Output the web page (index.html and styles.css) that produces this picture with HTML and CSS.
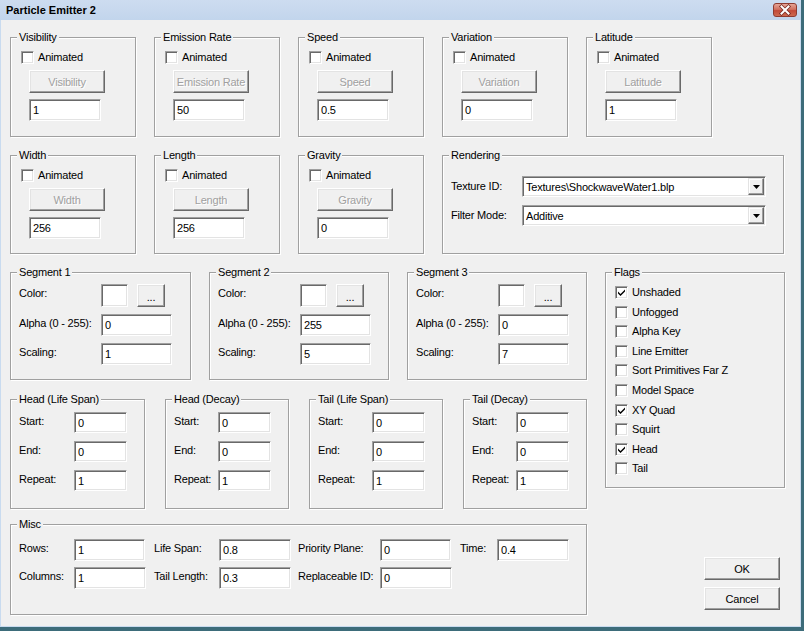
FILE: index.html
```html
<!DOCTYPE html>
<html lang="en">

<head>
    <meta charset="UTF-8">
    <title>Particle Emitter 2</title>
    <link rel="stylesheet" href="styles.css">
</head>

<body>
    <!-- dialog window -->
    <div class="dialog">
        <div class="titlebar">
            <span class="title">Particle Emitter 2</span>
            <span class="close">
                <svg width="22" height="12" viewBox="0 0 22 12">
                    <path d="M7.5 2.5 L14.5 9.5 M14.5 2.5 L7.5 9.5" stroke="#7a2e26" stroke-width="3.6" stroke-linecap="square" />
                    <path d="M7.5 2.5 L14.5 9.5 M14.5 2.5 L7.5 9.5" stroke="#fff" stroke-width="2" stroke-linecap="square" />
                </svg>
            </span>
        </div>

        <div class="client">
            <!-- animated values, first row -->
            <div class="row row-anim">
                <div class="group anim">
                    <span class="caption">Visibility</span>
                    <label class="check"><span class="box"></span>Animated</label>
                    <span class="btn disabled">Visibility</span>
                    <span class="edit">1</span>
                </div>
                <div class="group anim">
                    <span class="caption">Emission Rate</span>
                    <label class="check"><span class="box"></span>Animated</label>
                    <span class="btn disabled">Emission Rate</span>
                    <span class="edit">50</span>
                </div>
                <div class="group anim">
                    <span class="caption">Speed</span>
                    <label class="check"><span class="box"></span>Animated</label>
                    <span class="btn disabled">Speed</span>
                    <span class="edit">0.5</span>
                </div>
                <div class="group anim">
                    <span class="caption">Variation</span>
                    <label class="check"><span class="box"></span>Animated</label>
                    <span class="btn disabled">Variation</span>
                    <span class="edit">0</span>
                </div>
                <div class="group anim">
                    <span class="caption">Latitude</span>
                    <label class="check"><span class="box"></span>Animated</label>
                    <span class="btn disabled">Latitude</span>
                    <span class="edit">1</span>
                </div>
            </div>

            <!-- animated values, second row + rendering -->
            <div class="row row-anim2">
                <div class="group anim">
                    <span class="caption">Width</span>
                    <label class="check"><span class="box"></span>Animated</label>
                    <span class="btn disabled">Width</span>
                    <span class="edit">256</span>
                </div>
                <div class="group anim">
                    <span class="caption">Length</span>
                    <label class="check"><span class="box"></span>Animated</label>
                    <span class="btn disabled">Length</span>
                    <span class="edit">256</span>
                </div>
                <div class="group anim">
                    <span class="caption">Gravity</span>
                    <label class="check"><span class="box"></span>Animated</label>
                    <span class="btn disabled">Gravity</span>
                    <span class="edit">0</span>
                </div>
                <div class="group rendering">
                    <span class="caption">Rendering</span>
                    <span class="lbl">Texture ID:</span>
                    <span class="combo">Textures\ShockwaveWater1.blp<span class="drop"><svg width="7" height="4" viewBox="0 0 7 4"><polygon points="0,0 7,0 3.5,4" fill="#000" /></svg></span></span>
                    <span class="lbl">Filter Mode:</span>
                    <span class="combo">Additive<span class="drop"><svg width="7" height="4" viewBox="0 0 7 4"><polygon points="0,0 7,0 3.5,4" fill="#000" /></svg></span></span>
                </div>
            </div>

            <div class="lower">
                <div class="lower-left">
                    <!-- segments -->
                    <div class="row row-seg">
                        <div class="group seg">
                            <span class="caption">Segment 1</span>
                            <span class="lbl">Color:</span>
                            <span class="color-cell"><span class="edit swatch"></span><span class="btn dots">...</span></span>
                            <span class="lbl">Alpha (0 - 255):</span>
                            <span class="edit">0</span>
                            <span class="lbl">Scaling:</span>
                            <span class="edit">1</span>
                        </div>
                        <div class="group seg">
                            <span class="caption">Segment 2</span>
                            <span class="lbl">Color:</span>
                            <span class="color-cell"><span class="edit swatch"></span><span class="btn dots">...</span></span>
                            <span class="lbl">Alpha (0 - 255):</span>
                            <span class="edit">255</span>
                            <span class="lbl">Scaling:</span>
                            <span class="edit">5</span>
                        </div>
                        <div class="group seg">
                            <span class="caption">Segment 3</span>
                            <span class="lbl">Color:</span>
                            <span class="color-cell"><span class="edit swatch"></span><span class="btn dots">...</span></span>
                            <span class="lbl">Alpha (0 - 255):</span>
                            <span class="edit">0</span>
                            <span class="lbl">Scaling:</span>
                            <span class="edit">7</span>
                        </div>
                    </div>

                    <!-- life span / decay -->
                    <div class="row row-life">
                        <div class="group life">
                            <span class="caption">Head (Life Span)</span>
                            <span class="lbl">Start:</span><span class="edit">0</span>
                            <span class="lbl">End:</span><span class="edit">0</span>
                            <span class="lbl">Repeat:</span><span class="edit">1</span>
                        </div>
                        <div class="group life">
                            <span class="caption">Head (Decay)</span>
                            <span class="lbl">Start:</span><span class="edit">0</span>
                            <span class="lbl">End:</span><span class="edit">0</span>
                            <span class="lbl">Repeat:</span><span class="edit">1</span>
                        </div>
                        <div class="group life">
                            <span class="caption">Tail (Life Span)</span>
                            <span class="lbl">Start:</span><span class="edit">0</span>
                            <span class="lbl">End:</span><span class="edit">0</span>
                            <span class="lbl">Repeat:</span><span class="edit">1</span>
                        </div>
                        <div class="group life">
                            <span class="caption">Tail (Decay)</span>
                            <span class="lbl">Start:</span><span class="edit">0</span>
                            <span class="lbl">End:</span><span class="edit">0</span>
                            <span class="lbl">Repeat:</span><span class="edit">1</span>
                        </div>
                    </div>

                    <!-- misc -->
                    <div class="group misc">
                        <span class="caption">Misc</span>
                        <span class="lbl">Rows:</span><span class="edit">1</span>
                        <span class="lbl">Life Span:</span><span class="edit">0.8</span>
                        <span class="lbl">Priority Plane:</span><span class="edit">0</span>
                        <span class="lbl">Time:</span><span class="edit">0.4</span>
                        <span class="lbl">Columns:</span><span class="edit">1</span>
                        <span class="lbl">Tail Length:</span><span class="edit">0.3</span>
                        <span class="lbl">Replaceable ID:</span><span class="edit">0</span>
                    </div>
                </div>

                <div class="lower-right">
                    <!-- flags -->
                    <div class="group flags">
                        <span class="caption">Flags</span>
                        <label class="check"><span class="box on"><svg width="7" height="7" viewBox="0 0 7 7"><path d="M0 2.5 L2.5 5 L7 0.5 L7 2.5 L2.5 7 L0 4.5 Z" fill="#000" /></svg></span>Unshaded</label>
                        <label class="check"><span class="box"></span>Unfogged</label>
                        <label class="check"><span class="box"></span>Alpha Key</label>
                        <label class="check"><span class="box"></span>Line Emitter</label>
                        <label class="check"><span class="box"></span>Sort Primitives Far Z</label>
                        <label class="check"><span class="box"></span>Model Space</label>
                        <label class="check"><span class="box on"><svg width="7" height="7" viewBox="0 0 7 7"><path d="M0 2.5 L2.5 5 L7 0.5 L7 2.5 L2.5 7 L0 4.5 Z" fill="#000" /></svg></span>XY Quad</label>
                        <label class="check"><span class="box"></span>Squirt</label>
                        <label class="check"><span class="box on"><svg width="7" height="7" viewBox="0 0 7 7"><path d="M0 2.5 L2.5 5 L7 0.5 L7 2.5 L2.5 7 L0 4.5 Z" fill="#000" /></svg></span>Head</label>
                        <label class="check"><span class="box"></span>Tail</label>
                    </div>

                    <div class="actions">
                        <span class="btn action">OK</span>
                        <span class="btn action">Cancel</span>
                    </div>
                </div>
            </div>
        </div>
    </div>
</body>

</html>
```

FILE: styles.css
```css
* {
    box-sizing: border-box;
}

body {
    margin: 0;
    background: #3d6c7a;
    font: 11px "Liberation Sans", Tahoma, Arial, sans-serif;
    color: #000;
}

.dialog {
    width: 801px;
    height: 627px;
    background: #c9dbef;
    display: flex;
    flex-direction: column;
}

/* title bar */
.titlebar {
    height: 20px;
    flex: none;
    display: flex;
    align-items: center;
    justify-content: space-between;
    padding: 0 4px 0 6px;
    background: linear-gradient(#cddcf0, #c2d5ec);
}

.title {
    font-weight: bold;
}

.close {
    width: 24px;
    height: 14px;
    display: flex;
    align-items: center;
    justify-content: center;
    border: 1px solid #8e3b30;
    border-radius: 3px;
    background: linear-gradient(#e6a597, #d0705f 45%, #c24a38 55%, #cd6a50);
}

.client {
    flex: 1;
    margin: 0 1px 1px 1px;
    background: #f0f0f0;
    padding: 17px 0 0 9px;
    letter-spacing: -0.2px;
}

/* group box */
.group {
    position: relative;
    border: 1px solid #a0a0a0;
    box-shadow: inset 1px 1px #fff, 1px 1px #fff;
}

.caption {
    position: absolute;
    top: -7px;
    left: 6px;
    padding: 0 2px;
    line-height: 13px;
    background: #f0f0f0;
    white-space: nowrap;
}

.lbl {
    line-height: 13px;
    padding-top: 3px;
    white-space: nowrap;
}

/* controls */
.edit {
    display: flex;
    align-items: center;
    padding-left: 3px;
    background: #fff;
    border: 1px solid;
    border-color: #a0a0a0 #fff #fff #a0a0a0;
    box-shadow: inset 1px 1px #696969, inset -1px -1px #e3e3e3;
}

.btn {
    display: flex;
    align-items: center;
    justify-content: center;
    background: #f0f0f0;
    border: 1px solid;
    border-color: #fff #696969 #696969 #fff;
    box-shadow: inset -1px -1px #a0a0a0, inset 1px 1px #e3e3e3;
    white-space: nowrap;
}

.btn.disabled {
    color: #a0a0a0;
    text-shadow: 1px 1px #fff;
}

.check {
    display: flex;
    align-items: center;
    gap: 4px;
    height: 13px;
    line-height: 13px;
    white-space: nowrap;
}

.box {
    width: 13px;
    height: 13px;
    flex: none;
    display: flex;
    align-items: center;
    justify-content: center;
    background: #fff;
    border: 1px solid;
    border-color: #a0a0a0 #fff #fff #a0a0a0;
    box-shadow: inset 1px 1px #696969, inset -1px -1px #e3e3e3;
}

.combo {
    height: 21px;
    display: flex;
    align-items: center;
    justify-content: space-between;
    padding-left: 3px;
    background: #fff;
    border: 1px solid;
    border-color: #a0a0a0 #fff #fff #a0a0a0;
    box-shadow: inset 1px 1px #696969, inset -1px -1px #e3e3e3;
}

.combo .drop {
    width: 16px;
    height: 17px;
    margin-right: 1px;
    display: flex;
    align-items: center;
    justify-content: center;
    background: #f0f0f0;
    border: 1px solid;
    border-color: #e3e3e3 #696969 #696969 #e3e3e3;
    box-shadow: inset -1px -1px #a0a0a0, inset 1px 1px #fff;
}

/* rows */
.row {
    display: grid;
    column-gap: 18px;
}

.row-anim {
    grid-template-columns: repeat(5, 126px);
    height: 100px;
}

.row-anim2 {
    grid-template-columns: 126px 126px 126px 342px;
    height: 99px;
    margin-top: 18px;
}

.anim {
    display: flex;
    flex-direction: column;
    align-items: flex-start;
    padding: 13px 0 0 10px;
}

.anim .btn {
    width: 76px;
    height: 23px;
    margin: 6px 0 0 8px;
}

.anim .edit {
    width: 72px;
    height: 22px;
    margin: 6px 0 0 8px;
}

.rendering {
    display: grid;
    grid-template-columns: 71px 244px;
    grid-auto-rows: 21px;
    row-gap: 8px;
    align-content: start;
    align-items: center;
    padding: 20px 0 0 8px;
}

.rendering .lbl {
    padding-top: 0;
}

/* lower part */
.lower {
    display: grid;
    grid-template-columns: 577px 180px;
    column-gap: 18px;
    margin-top: 18px;
}

.row-seg {
    grid-template-columns: 181px 180px 180px;
    height: 108px;
}

.seg {
    display: grid;
    grid-template-columns: 82px 71px;
    grid-template-rows: 23px 22px 22px;
    row-gap: 7px;
    align-content: start;
    padding: 11px 0 0 8px;
}

.color-cell {
    display: flex;
    gap: 9px;
}

.swatch {
    width: 27px;
    height: 23px;
}

.dots {
    width: 28px;
    height: 23px;
    padding-top: 3px;
}

.row-life {
    grid-template-columns: 135px 124px 134px 124px;
    column-gap: 20px;
    height: 110px;
    margin-top: 19px;
}

.life {
    display: grid;
    grid-template-columns: 1fr 53px;
    grid-auto-rows: 21px;
    row-gap: 8px;
    align-content: start;
    padding: 12px 17px 0 8px;
}

.misc {
    display: grid;
    grid-template-columns: 55px 80px 65px 79px 82px 80px 37px 71px;
    grid-auto-rows: 22px;
    row-gap: 6px;
    align-content: start;
    height: 91px;
    margin-top: 15px;
    padding: 14px 0 0 8px;
}

.misc .edit {
    width: 72px;
}

.misc .edit:nth-of-type(3),
.misc .edit:nth-of-type(4),
.misc .edit:nth-of-type(7) {
    width: 71px;
}

/* flags + buttons */
.flags {
    height: 216px;
    display: flex;
    flex-direction: column;
    gap: 6.6px;
    padding: 13px 0 0 9px;
}

.actions {
    display: flex;
    flex-direction: column;
    align-items: flex-end;
    gap: 7px;
    margin-top: 69px;
    padding-right: 5px;
}

.action {
    width: 76px;
    height: 23px;
}
```
